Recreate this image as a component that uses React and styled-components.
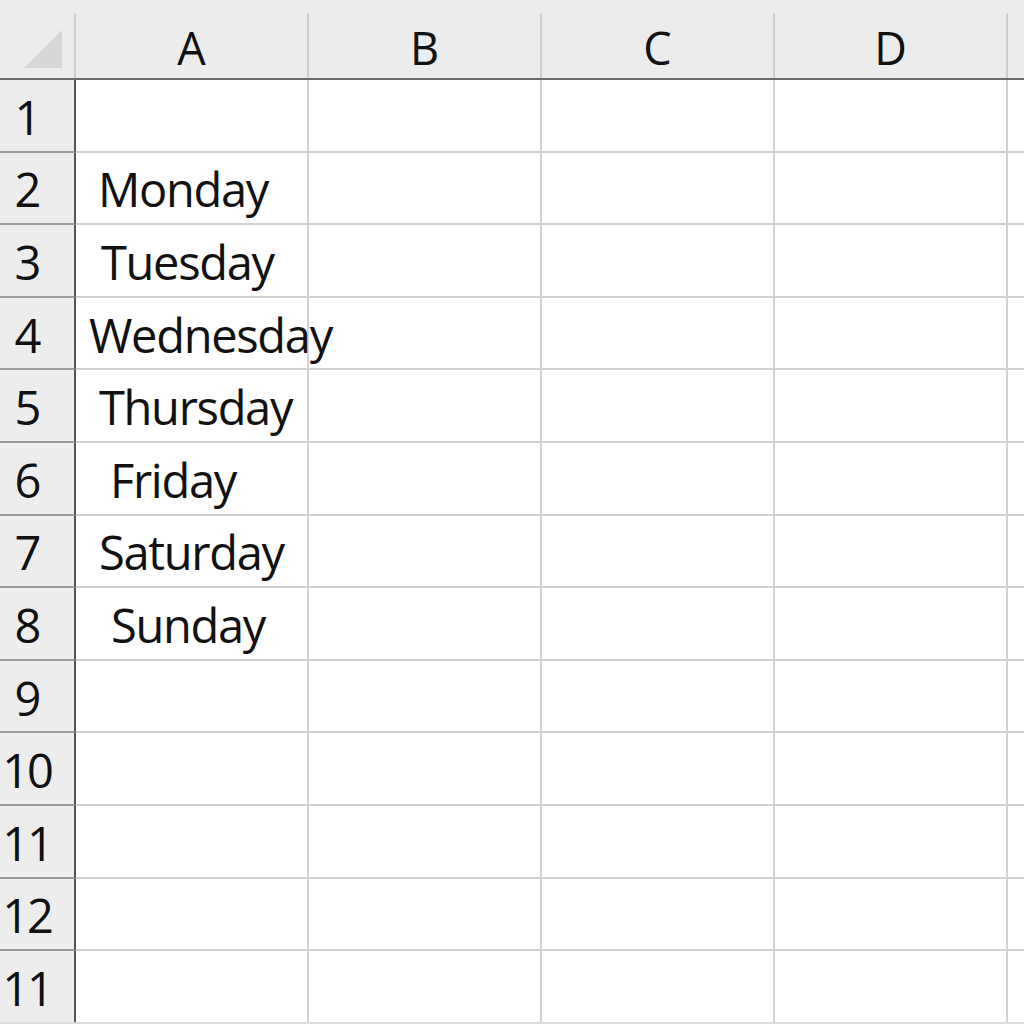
import React from 'react'
import styled, { createGlobalStyle } from 'styled-components'

const GlobalStyle = createGlobalStyle`
  html, body {
    margin: 0;
    padding: 0;
    background: #ffffff;
    overflow: hidden;
  }
  body {
    font-family: 'Open Sans', 'Noto Sans', sans-serif;
    color: #111111;
  }
`

const COLUMNS = ['A', 'B', 'C', 'D', '']

// row label, cell text in column A, and how far the text sits from the left edge
const ROWS = [
  { label: '1' },
  { label: '2', text: 'Monday', indent: 22 },
  { label: '3', text: 'Tuesday', indent: 25 },
  { label: '4', text: 'Wednesday', indent: 13 },
  { label: '5', text: 'Thursday', indent: 23 },
  { label: '6', text: 'Friday', indent: 34 },
  { label: '7', text: 'Saturday', indent: 23 },
  { label: '8', text: 'Sunday', indent: 35 },
  { label: '9' },
  { label: '10' },
  { label: '11' },
  { label: '12' },
  { label: '11' }
]

const Sheet = styled.div`
  display: flex;
  flex-direction: column;
  width: 1024px;
  height: 1024px;
  background: #ffffff;
  border-bottom: 2px solid #dcdcdc;
  box-sizing: border-box;
  overflow: hidden;
`

const HeaderRow = styled.div`
  display: flex;
  align-items: flex-end;
  flex: 0 0 80px;
  background: #ececec;
  border-bottom: 2px solid #6b6b6b;
  box-sizing: border-box;
`

const Corner = styled.div`
  display: flex;
  align-items: flex-end;
  justify-content: flex-end;
  flex: 0 0 76px;
  height: 65px;
  padding: 0 12px 10px 0;
  border-right: 2px solid #cfcfcf;
  box-sizing: border-box;
`

const ColumnHeader = styled.div`
  display: flex;
  align-items: center;
  justify-content: center;
  flex: ${props => (props.fill ? '1 1 auto' : '0 0 233px')};
  height: 65px;
  border-right: ${props => (props.fill ? 'none' : '2px solid #cfcfcf')};
  box-sizing: border-box;
  font-size: 45px;
  line-height: 1;
  padding-top: 4px;
`

const Row = styled.div`
  display: flex;
  flex: 0 0 72.6px;
`

const RowHeader = styled.div`
  display: flex;
  align-items: center;
  justify-content: center;
  flex: 0 0 76px;
  padding: 3px 20px 0 0;
  background: #ededed;
  border-right: 2px solid #555555;
  border-bottom: 2px solid #9a9a9a;
  box-sizing: border-box;
  font-size: 47px;
  letter-spacing: -2px;
`

const Cell = styled.div`
  display: flex;
  align-items: center;
  flex: ${props => (props.fill ? '1 1 auto' : '0 0 233px')};
  padding: 3px 0 0 ${props => props.indent || 0}px;
  border-right: ${props => (props.fill ? 'none' : '2px solid #d2d2d2')};
  border-bottom: 2px solid #d2d2d2;
  box-sizing: border-box;
  font-size: 47px;
  letter-spacing: -1.3px;
  white-space: nowrap;
  overflow: visible;
  min-width: 0;
`

const SelectAll = () => (
  <svg width="38" height="38" viewBox="0 0 38 38">
    <polygon points="0,38 38,38 38,0" fill="#d6d6d6" />
  </svg>
)

const App = () => (
  <>
    <GlobalStyle />
    <Sheet>
      <HeaderRow>
        <Corner>
          <SelectAll />
        </Corner>
        {COLUMNS.map((name, i) => (
          <ColumnHeader key={i} fill={i === COLUMNS.length - 1}>
            {name}
          </ColumnHeader>
        ))}
      </HeaderRow>
      {ROWS.map((row, r) => (
        <Row key={r}>
          <RowHeader>{row.label}</RowHeader>
          {COLUMNS.map((_, c) => (
            <Cell
              key={c}
              fill={c === COLUMNS.length - 1}
              indent={c === 0 ? row.indent : 0}
            >
              {c === 0 ? row.text : null}
            </Cell>
          ))}
        </Row>
      ))}
    </Sheet>
  </>
)

export default App
